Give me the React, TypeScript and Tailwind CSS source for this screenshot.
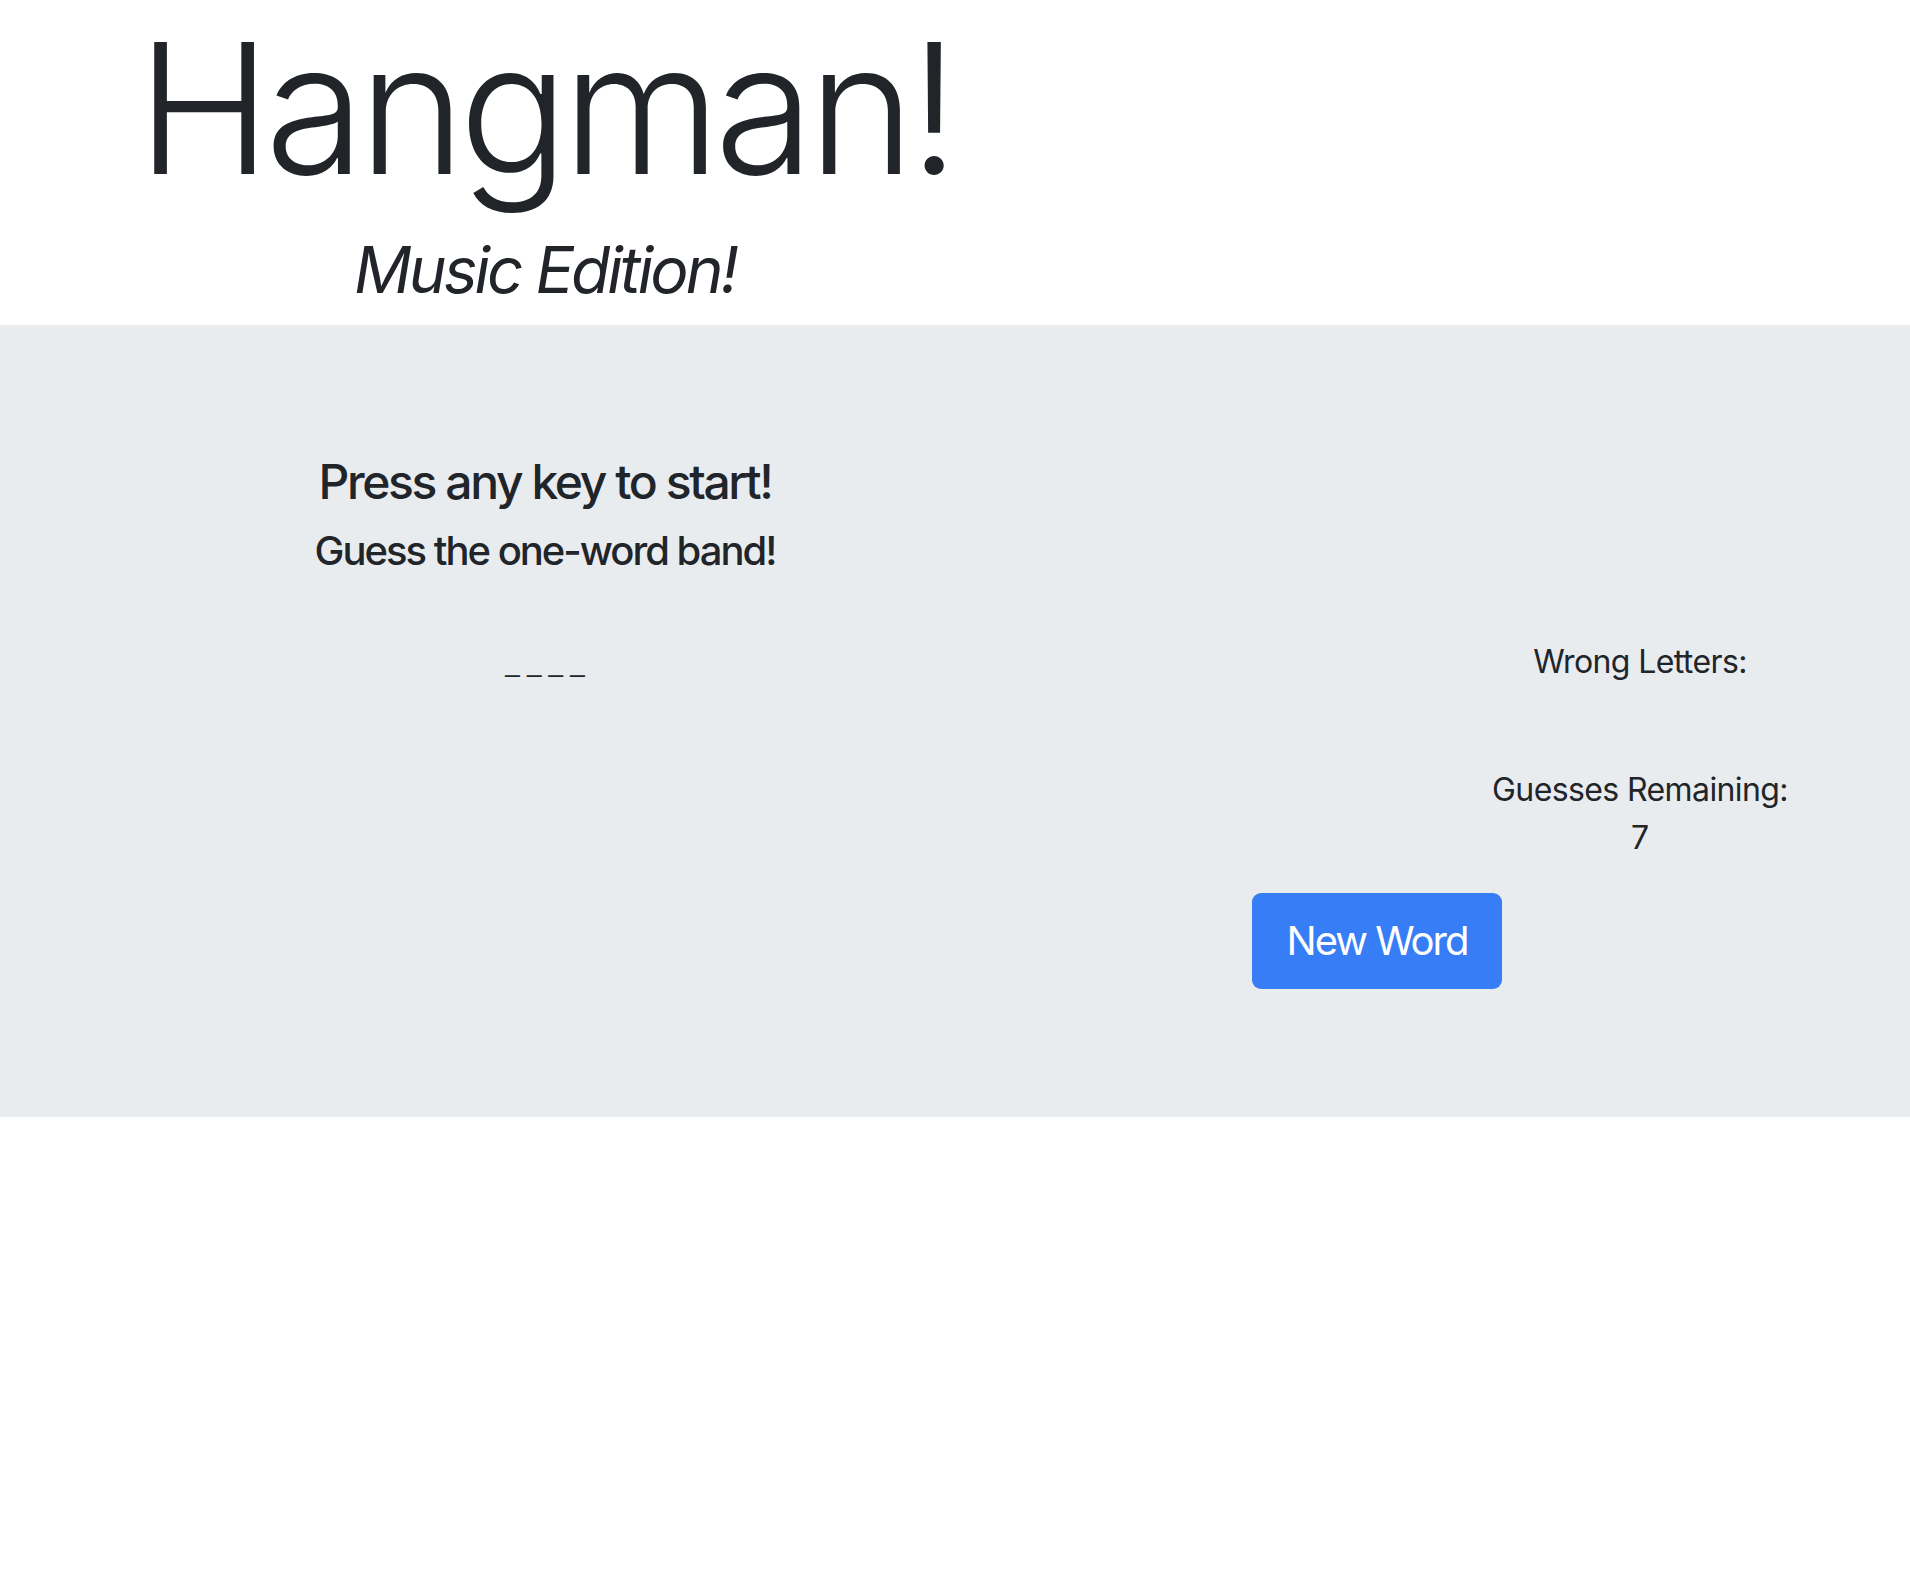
const Stat = ({ label, value }: { label: string; value?: string }) => {
  return (
    <div className="text-center">
      <p className="text-[32px] leading-[48px] tracking-[-0.6px]">{label}</p>
      <p className="text-[32px] leading-[48px] min-h-[48px]">{value}</p>
    </div>
  );
};

const App = () => {
  return (
    <div className="min-h-[1588px] bg-white text-[#212529] font-['Inter','Noto_Sans',sans-serif]">
      {/* header */}
      <div className="flex flex-row">
        <div className="w-[1090px] text-center">
          <h1 className="pt-[8px] text-[182px] leading-[1.1] font-light tracking-[-6.5px]">
            Hangman!
          </h1>
          <h2 className="mt-[24px] pb-[16px] text-[64px] leading-[1.2] italic font-normal tracking-[-3px]">
            Music Edition!
          </h2>
        </div>
      </div>

      {/* game board */}
      <div className="bg-[#e9ecef] pt-[128px] pb-[128px]">
        <div className="flex flex-row">
          <div className="w-[1090px] text-center">
            <h4 className="text-[48px] leading-[1.2] font-medium tracking-[-2.4px]">
              Press any key to start!
            </h4>
            <h5 className="mt-[16px] text-[40px] leading-[1.2] font-medium tracking-[-2px]">
              Guess the one-word band!
            </h5>
            <p className="mt-[68px] text-[26px] leading-[40px] font-['Liberation_Sans',sans-serif]">
              _ _ _ _
            </p>
          </div>

          <div className="flex-1 flex flex-col pl-[162px] pt-[185px]">
            <div className="self-end w-[540px] flex flex-col gap-[32px]">
              <Stat label="Wrong Letters:" />
              <Stat label="Guesses Remaining:" value="7" />
            </div>
            <div className="mt-[31px]">
              <button className="bg-[#377df6] text-white rounded-[9px] h-[96px] w-[250px] text-[40px] leading-[1.5] font-normal tracking-[-2px]">
                New Word
              </button>
            </div>
          </div>
        </div>
      </div>
    </div>
  );
};

export default App;
